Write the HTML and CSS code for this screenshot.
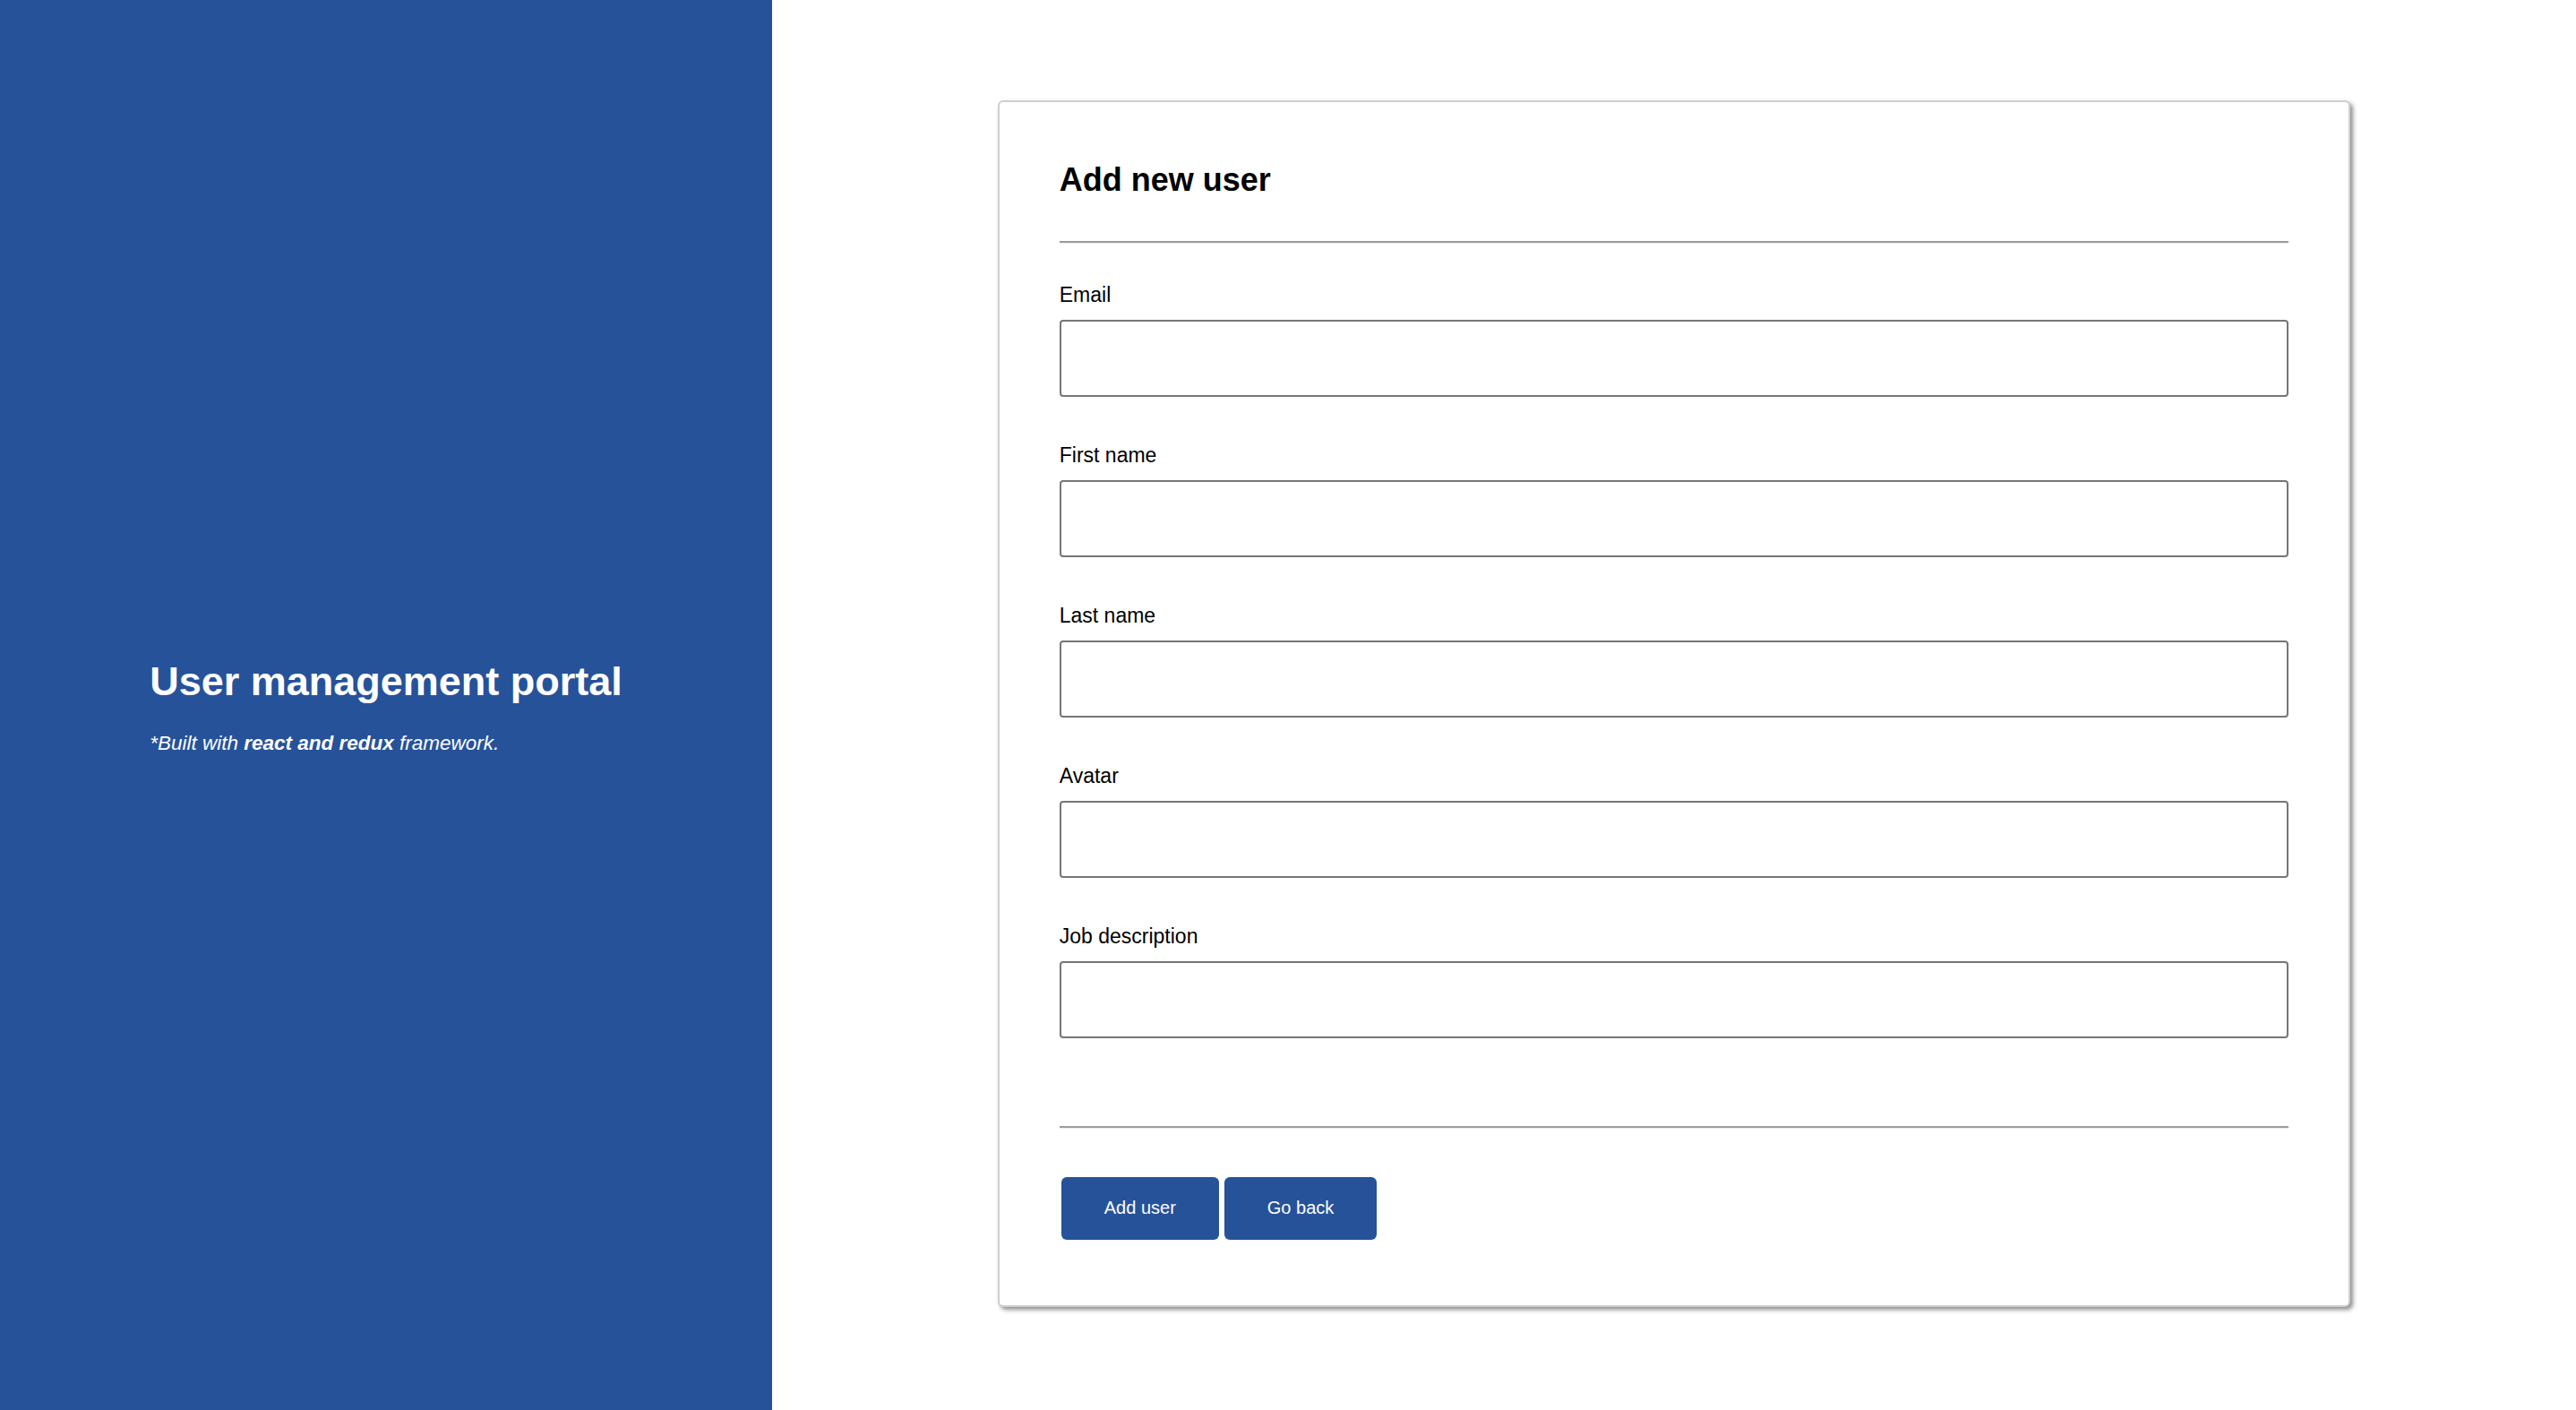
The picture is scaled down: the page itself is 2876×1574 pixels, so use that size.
FILE: index.html
```html
<!DOCTYPE html>
<html lang="en">
<head>
<meta charset="utf-8">
<title>User management portal</title>
<link rel="stylesheet" href="styles.css">
</head>
<body>
<div class="page">
  <aside class="brand">
    <div class="brand-inner">
      <h1 class="brand-title">User management portal</h1>
      <p class="brand-note">*Built with <strong>react and redux</strong> framework.</p>
    </div>
  </aside>
  <main class="content">
    <form class="card">
      <h2 class="card-title">Add new user</h2>
      <hr class="divider">
      <div class="fields">
        <div class="field">
          <label class="field-label" for="email">Email</label>
          <input class="field-input" id="email" type="text">
        </div>
        <div class="field">
          <label class="field-label" for="first">First name</label>
          <input class="field-input" id="first" type="text">
        </div>
        <div class="field">
          <label class="field-label" for="last">Last name</label>
          <input class="field-input" id="last" type="text">
        </div>
        <div class="field">
          <label class="field-label" for="avatar">Avatar</label>
          <input class="field-input" id="avatar" type="text">
        </div>
        <div class="field">
          <label class="field-label" for="job">Job description</label>
          <input class="field-input" id="job" type="text">
        </div>
      </div>
      <hr class="divider divider-bottom">
      <div class="actions">
        <button class="btn" type="button">Add user</button>
        <button class="btn" type="button">Go back</button>
      </div>
    </form>
  </main>
</div>
</body>
</html>
```
FILE: styles.css
```css
html, body {
  margin: 0;
  padding: 0;
  height: 100%;
  background: #ffffff;
  font-family: "Liberation Sans", Arial, Helvetica, sans-serif;
}

.page {
  display: flex;
  height: 100vh;
}

.brand {
  flex: none;
  box-sizing: border-box;
  width: 862px;
  padding-top: 4px;
  background: #26529a;
  color: #ffffff;
  display: flex;
  align-items: center;
  justify-content: center;
}

.brand-title {
  margin: 0;
  font-weight: bold;
  font-size: 45px;
  line-height: 52px;
}

.brand-note {
  margin: 30px 0 0;
  font-style: italic;
  font-size: 22.5px;
  line-height: 26px;
}

.brand-note strong {
  font-weight: bold;
}

.content {
  flex: 1;
  display: flex;
  align-items: center;
  justify-content: center;
}

.card {
  box-sizing: border-box;
  width: 75%;
  margin-bottom: 4px;
  background: #ffffff;
  border: 2px solid #cfcfcf;
  border-radius: 6px;
  padding: 67px 67px 73px;
  box-shadow: 3px 3px 5px rgba(0, 0, 0, 0.45);
}

.card-title {
  margin: 0;
  font-weight: bold;
  font-size: 36px;
  line-height: 40px;
  color: #000000;
}

.divider {
  margin: 48px 0 0;
  height: 0;
  border: 0;
  border-top: 2px solid #9c9c9c;
  border-bottom: 1px solid #ececec;
}

.fields {
  margin-top: 44px;
  display: flex;
  flex-direction: column;
  gap: 52px;
}

.field-label {
  display: block;
  font-size: 23px;
  line-height: 27px;
  margin-bottom: 14px;
  color: #000000;
}

.field-input {
  display: block;
  box-sizing: border-box;
  width: 100%;
  height: 86px;
  margin: 0;
  padding: 0 14px;
  border: 2px solid #767676;
  border-radius: 4px;
  background: #ffffff;
  font-family: "Liberation Sans", Arial, sans-serif;
  font-size: 23px;
}

.divider-bottom {
  margin-top: 98px;
}

.actions {
  margin-top: 54px;
  padding-left: 2px;
  display: flex;
  gap: 6px;
}

.btn {
  height: 70px;
  padding: 0 48px;
  border: 0;
  border-radius: 6px;
  background: #26529a;
  color: #ffffff;
  font-family: "Liberation Sans", Arial, sans-serif;
  font-size: 20px;
  cursor: pointer;
}
```
